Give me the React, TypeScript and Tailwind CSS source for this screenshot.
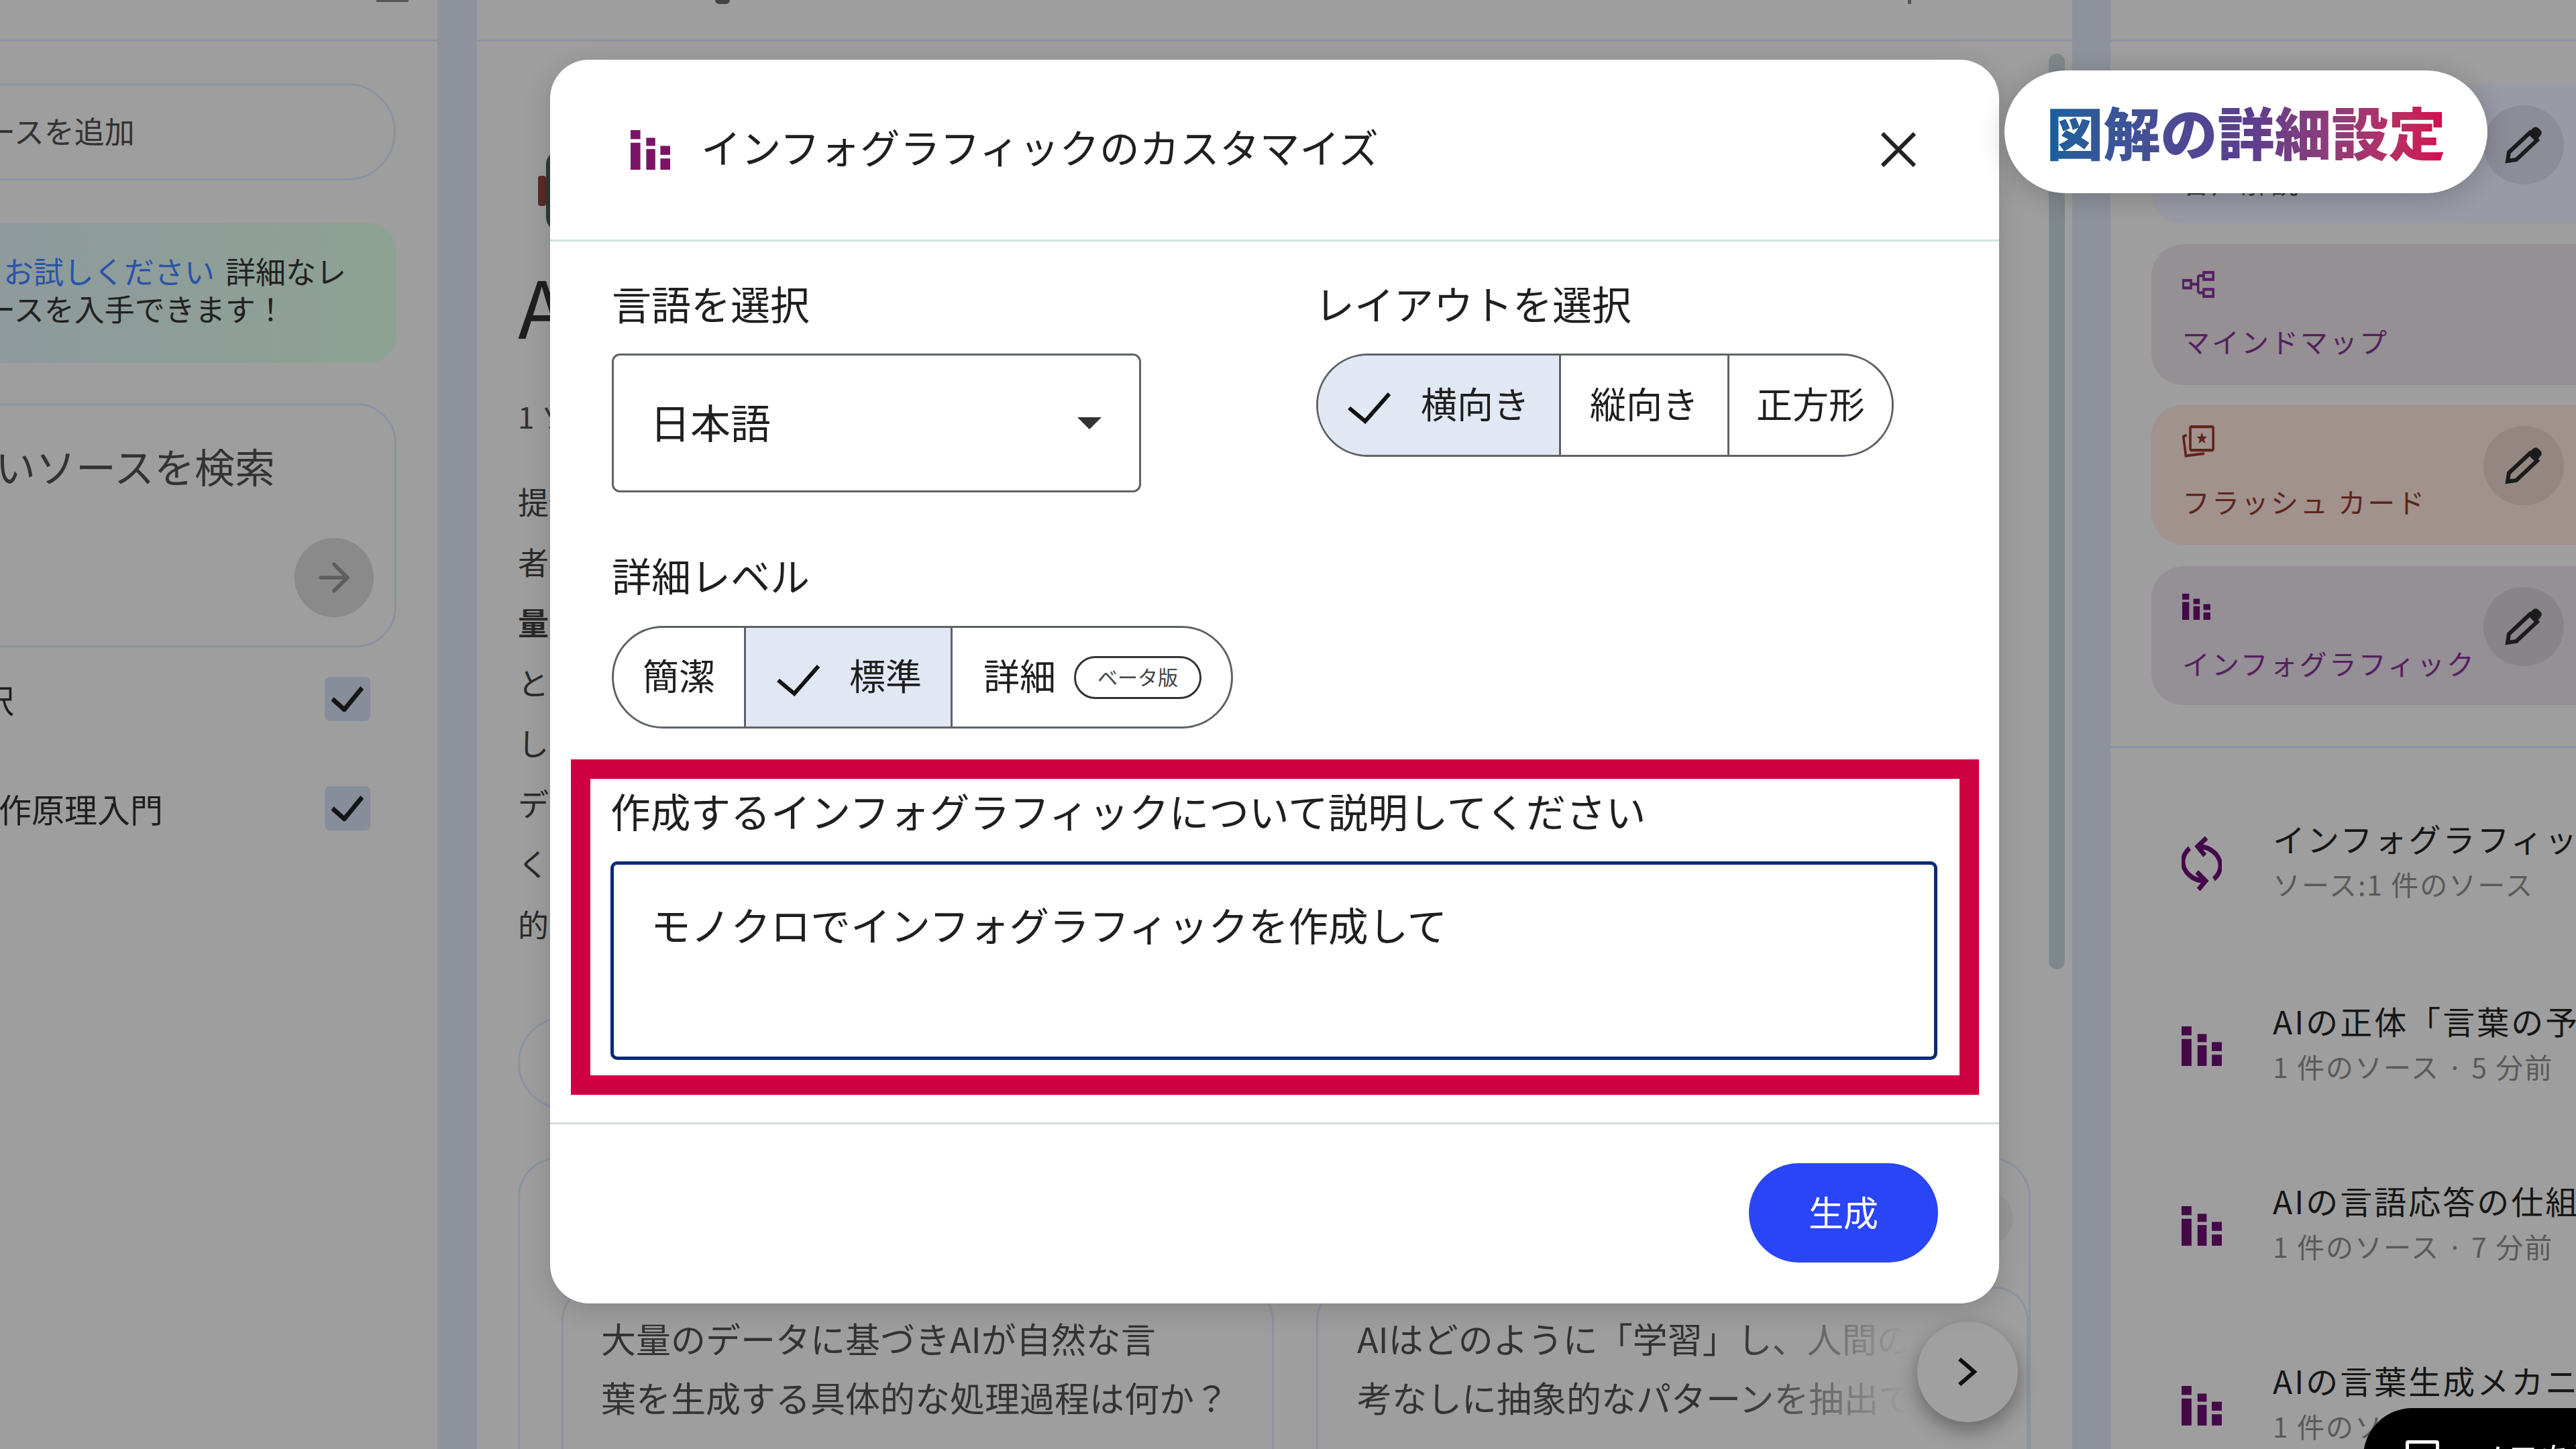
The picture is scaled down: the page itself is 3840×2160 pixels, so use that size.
import { ArrowRight } from "lucide-react";

function InfoIcon({ className }: { className: string }) {
  return (
    <svg viewBox="0 0 101 88" preserveAspectRatio="none" className={className} fill="currentColor">
      <rect x="0" y="0" width="25" height="20" />
      <rect x="0" y="28" width="25" height="60" />
      <rect x="40" y="17" width="23" height="18" />
      <rect x="40" y="42" width="23" height="46" />
      <rect x="76" y="35" width="25" height="20" />
      <rect x="76" y="63" width="25" height="25" />
    </svg>
  );
}

function SyncIcon() {
  return (
    <svg viewBox="0 0 100 120" preserveAspectRatio="none" className="w-[60px] h-[81px] text-[#45094a]" fill="none" stroke="currentColor" strokeWidth="11">
      <path d="M42 22C75 22 100 45 96 70C94 80 88 88 80 94" />
      <path d="M62 3L40 22L58 42" />
      <path d="M58 98C25 98 0 75 4 50C6 40 12 32 20 26" />
      <path d="M38 78L60 98L42 117" />
    </svg>
  );
}

function MindmapIcon() {
  return (
    <svg viewBox="0 0 81 57" preserveAspectRatio="none" className="w-[48px] h-[40px] text-[#55205f]" fill="none" stroke="currentColor" strokeWidth="6">
      <rect x="2" y="20" width="20" height="16" />
      <path d="M22 28H40M40 10V46M40 10H54M40 46H54" />
      <rect x="54" y="3" width="24" height="15" />
      <rect x="54" y="39" width="24" height="15" />
    </svg>
  );
}

function FlashIcon() {
  return (
    <svg viewBox="0 0 80 70" preserveAspectRatio="none" className="w-[48px] h-[49px] text-[#5e241c]" fill="none" stroke="currentColor" strokeWidth="6">
      <rect x="20" y="3" width="57" height="50" rx="3" />
      <path d="M11 21L3 24L9 65L55 60" />
      <path d="M49 15L52.5 24H62L54.5 30L57.5 39L49 33.5L40.500 39L43.500 30L36 24H45.500Z" fill="currentColor" stroke="none" />
    </svg>
  );
}

function Pencil() {
  return (
    <svg viewBox="0 0 56 56" className="w-[56px] h-[56px] text-[#1c1c1c]">
      <path d="M4 52L6 39L37 10L48 21L17 50Z" fill="none" stroke="currentColor" strokeWidth="6" />
      <path d="M35 9L43 2Q47 0 50 3L54 7Q56 11 53 14L47 22Z" fill="currentColor" />
    </svg>
  );
}

function Check({ className, sw = 6 }: { className: string; sw?: number }) {
  return (
    <svg viewBox="0 0 65 48" preserveAspectRatio="none" className={className} fill="none" stroke="currentColor" strokeWidth={sw}>
      <path d="M2 24L26 44L62 3" />
    </svg>
  );
}

function PencilButton() {
  return (
    <div className="absolute right-[85px] top-1/2 -translate-y-1/2 -mt-[14px] w-[120px] h-[118px] rounded-full bg-[#00000014] flex items-center justify-center">
      <Pencil />
    </div>
  );
}

function ToolCard({ bg, color, icon, label, top, pencil, h }: { bg: string; color: string; icon: React.ReactNode; label: string; top: string; pencil?: boolean; h: string }) {
  return (
    <div className={`relative w-[700px] rounded-[48px] pl-[46px] ${bg} ${color} ${top} ${h}`}>
      <div className="h-[100px] flex items-end pb-[20px]">{icon}</div>
      <div className="text-[41px] leading-[60px] tracking-[3px] whitespace-nowrap mt-[14px]">{label}</div>
      {pencil && <PencilButton />}
    </div>
  );
}

function Artifact({ title, sub, icon, mt }: { title: string; sub: string; icon: React.ReactNode; mt: string }) {
  return (
    <div className={`flex items-center ${mt}`}>
      <div className="w-[60px] flex justify-center ml-[106px] mt-[8px]">{icon}</div>
      <div className="ml-[76px] whitespace-nowrap">
        <div className="text-[48px] leading-[68px] tracking-[3px] text-[#161616]">{title}</div>
        <div className="text-[41px] leading-[68px] tracking-[2px] text-[#5a5a5a]">{sub}</div>
      </div>
    </div>
  );
}

export default function App() {
  return (
    <div className="relative w-[3840px] h-[2160px] overflow-hidden bg-[#8e929c] text-[#1f1f1f] font-['Noto_Sans_CJK_JP','Noto_Sans',sans-serif]">
      <div className="flex h-full">
        {/* left panel */}
        <div className="w-[652px] h-full bg-[#9e9e9e] overflow-hidden shrink-0">
          <div className="h-[62px] border-b-[3px] border-[#8b93a2] flex justify-end pr-[43px]">
            <div className="w-[48px] h-[3px] bg-[#555]" />
          </div>
          <div className="mt-[62px] -ml-[120px] w-[710px] h-[145px] rounded-full border-[3px] border-[#8b93a2] flex items-center pl-[50px] pb-[4px] text-[45px] text-[#333] whitespace-nowrap">
            ソースを追加
          </div>
          <div className="mt-[63px] -ml-[60px] w-[650px] h-[209px] rounded-[40px] bg-linear-to-r from-[#8e999d] to-[#8ea294] pt-[44px] text-[45px] leading-[56px] whitespace-nowrap text-[#222]">
            <div className="ml-[65px]">
              <span className="text-[#2b53a8]">お試しください</span>
              <span className="ml-[16px]">詳細なレ</span>
            </div>
            <div className="ml-[38px]">ースを入手できます！</div>
          </div>
          <div className="relative mt-[60px] -ml-[60px] w-[651px] h-[364px] rounded-[60px] border-[3px] border-[#8b93a2] pt-[50px] pl-[50px]">
            <div className="text-[60px] leading-[80px] whitespace-nowrap text-[#333]">いソースを検索</div>
            <div className="absolute right-[31px] top-[198px] w-[118px] h-[118px] rounded-full bg-[#8a8a8a] flex items-center justify-center">
              <ArrowRight className="w-[68px] h-[68px] text-[#5e5e5e]" strokeWidth={2} />
            </div>
          </div>
          <div className="mt-[44px] flex items-center justify-between h-[65px] pr-[100px] text-[49px]">
            <div className="-ml-[28px] whitespace-nowrap">択</div>
            <div className="w-[68px] h-[66px] rounded-[8px] bg-[#878e99] flex items-center justify-center">
              <Check className="w-[48px] h-[38px] text-[#151515]" sw={9} />
            </div>
          </div>
          <div className="mt-[98px] flex items-center justify-between h-[66px] pr-[100px] text-[49px]">
            <div className="-ml-[2px] whitespace-nowrap">作原理入門</div>
            <div className="w-[68px] h-[66px] rounded-[8px] bg-[#878e99] flex items-center justify-center">
              <Check className="w-[48px] h-[38px] text-[#151515]" sw={9} />
            </div>
          </div>
        </div>

        {/* center panel */}
        <div className="relative ml-[59px] w-[2378px] h-full bg-[#9e9e9e] overflow-hidden shrink-0">
          <div className="h-[62px] border-b-[3px] border-[#8b93a2] flex items-start justify-between pl-[355px] pr-[240px]">
            <div className="w-[22px] h-[6px] rounded-b-full bg-[#444]" />
            <div className="w-[5px] h-[6px] bg-[#555]" />
          </div>
          <div className="pl-[61px]">
            <div className="mt-[163px] h-[119px] ml-[30px] flex items-center">
              <div className="w-[12px] h-[45px] rounded-[4px] bg-[#5a2a26]" />
              <div className="w-[40px] h-[119px] rounded-full bg-[#2d3a3a]" />
            </div>
            <div className="mt-[50px] text-[118px] leading-[120px] whitespace-nowrap">AIの言葉の仕組み</div>
            <div className="mt-[76px] text-[44px] leading-[60px] text-[#333]">1 ソース</div>
            <div className="mt-[51px] text-[46px] leading-[90px] whitespace-nowrap text-[#2a2a2a]">
              <div>提供された資料は、AIの動作原理を解説したものです。</div>
              <div>者に向けて説明しています。</div>
              <div className="font-bold">量のデータ</div>
              <div>として学習します。</div>
              <div>します。</div>
              <div>データから</div>
              <div>くの例を示します。</div>
              <div>的な内容です。</div>
            </div>
            <div className="mt-[94px] w-[500px] h-[139px] rounded-full border-[3px] border-[#8b93a2]" />
            <div className="mt-[71px] w-[2255px] h-[600px] rounded-[60px] border-[3px] border-[#8b93a2] pl-[62px] pt-[190px] flex gap-[63px]">
              <div className="w-[1066px] h-[400px] rounded-[50px] border-[3px] border-[#8b93a2] pl-[56px] pt-[30px] text-[52px] leading-[88px] text-[#333] whitespace-nowrap">
                <div>大量のデータに基づきAIが自然な言</div>
                <div>葉を生成する具体的な処理過程は何か？</div>
              </div>
              <div className="w-[1066px] h-[400px] rounded-[50px] border-[3px] border-[#8b93a2] pl-[58px] pt-[30px] text-[52px] leading-[88px] text-[#333] whitespace-nowrap">
                <div>AIはどのように「学習」し、人間の思</div>
                <div>考なしに抽象的なパターンを抽出で</div>
              </div>
            </div>
          </div>
          {/* fade on the card row, next to the arrow */}
          <div className="absolute left-[1880px] top-[1960px] w-[360px] h-[180px] bg-linear-to-r from-transparent to-[#9e9e9e] to-70%" />
          <div className="absolute left-[2147px] top-[1970px] w-[150px] h-[150px] rounded-full bg-[#a0a0a0] shadow-[0_12px_30px_rgba(0,0,0,0.35)] flex items-center justify-center">
            <svg viewBox="0 0 30 44" className="w-[30px] h-[44px] text-[#111]" fill="none" stroke="currentColor" strokeWidth="6">
              <path d="M3 3L25 22L3 41" />
            </svg>
          </div>
          <div className="absolute left-[2210px] top-[1776px] w-[80px] h-[80px] rounded-full bg-[#979797]" />
          <div className="absolute right-[11px] top-[80px] w-[24px] h-[1365px] rounded-full bg-[#7f888c]" />
        </div>

        {/* right panel */}
        <div className="ml-[57px] flex-1 h-full bg-[#9e9e9e] overflow-hidden">
          <div className="h-[62px] border-b-[3px] border-[#8b93a2]" />
          <div className="pl-[61px]">
            <ToolCard bg="bg-[#989aa6]" color="text-[#333]" top="mt-[64px]" h="h-[207px]" label="音声解説" icon={<div className="w-[48px] h-[40px]" />} pencil />
            <ToolCard bg="bg-[#949093]" color="text-[#55205f]" top="mt-[31px]" h="h-[210px]" label="マインドマップ" icon={<MindmapIcon />} />
            <ToolCard bg="bg-[#a1928d]" color="text-[#5e241c]" top="mt-[29px]" h="h-[209px]" label="フラッシュ カード" icon={<FlashIcon />} pencil />
            <ToolCard bg="bg-[#958f96]" color="text-[#55205f]" top="mt-[32px]" h="h-[207px]" label="インフォグラフィック" icon={<InfoIcon className="w-[42px] h-[39px] text-[#45094a]" />} pencil />
          </div>
          <div className="mt-[61px] border-t-[3px] border-[#8b93a2]" />
          <Artifact mt="mt-[100px]" icon={<SyncIcon />} title="インフォグラフィック" sub="ソース:1 件のソース" />
          <Artifact mt="mt-[136px]" icon={<InfoIcon className="w-[60px] h-[59px] text-[#45094a]" />} title="AIの正体「言葉の予測」" sub="1 件のソース · 5 分前" />
          <Artifact mt="mt-[132px]" icon={<InfoIcon className="w-[60px] h-[59px] text-[#45094a]" />} title="AIの言語応答の仕組み" sub="1 件のソース · 7 分前" />
          <Artifact mt="mt-[132px]" icon={<InfoIcon className="w-[60px] h-[59px] text-[#45094a]" />} title="AIの言葉生成メカニズム" sub="1 件のソース · 9 分前" />
        </div>
      </div>

      {/* notes button over the list */}
      <div className="absolute left-[3523px] top-[2099px] w-[500px] h-[146px] rounded-full bg-black flex items-center pl-[63px] text-white text-[50px] whitespace-nowrap">
        <div className="w-[50px] h-[50px] rounded-[4px] border-[5px] border-white" />
        <span className="ml-[50px]">メモを追加</span>
      </div>

      {/* modal */}
      <div className="absolute left-[820px] top-[89px] w-[2160px] h-[1854px] rounded-[58px] bg-white flex flex-col shadow-[0_10px_40px_rgba(0,0,0,0.15)]">
        <div className="h-[271px] shrink-0 border-b-[3px] border-[#d3e3e0] flex items-center pl-[120px] pr-[124px]">
          <InfoIcon className="w-[59px] h-[59px] text-[#7b1466]" />
          <div className="ml-[46px] -mt-[10px] text-[59.7px] leading-[80px] flex-1">インフォグラフィックのカスタマイズ</div>
          <svg viewBox="0 0 52 52" className="w-[52px] h-[52px] text-[#222]" stroke="currentColor" strokeWidth="6">
            <path d="M2 2L50 50M50 2L2 50" />
          </svg>
        </div>
        <div className="flex-1 px-[92px] pt-[52px]">
          <div className="flex">
            <div className="w-[1050px]">
              <div className="text-[59px] leading-[80px] mb-[35px]">言語を選択</div>
              <div className="w-[789px] h-[207px] rounded-[12px] border-[3px] border-[#5f6368] flex items-center justify-between pl-[54px] pr-[56px]">
                <span className="text-[60px] -mt-[6px]">日本語</span>
                <svg viewBox="0 0 36 18" className="w-[36px] h-[18px] text-[#333]" fill="currentColor">
                  <path d="M0 0H36L18 18Z" />
                </svg>
              </div>
            </div>
            <div>
              <div className="text-[59px] leading-[80px] mb-[35px] -ml-[2px]">レイアウトを選択</div>
              <div className="flex w-[861px] h-[154px] rounded-full border-[3px] border-[#5f6368] overflow-hidden text-[54px]">
                <div className="w-[362px] bg-[#e2e7f4] border-r-[3px] border-[#5f6368] flex items-center pl-[44px]">
                  <Check className="w-[65px] h-[48px] mt-[8px] text-[#111]" />
                  <span className="ml-[44px] -mt-[8px]">横向き</span>
                </div>
                <div className="w-[251px] border-r-[3px] border-[#5f6368] flex items-center justify-center pb-[8px]">縦向き</div>
                <div className="flex-1 flex items-center justify-center pb-[8px]">正方形</div>
              </div>
            </div>
          </div>
          <div className="mt-[83px] text-[59px] leading-[80px] mb-[36px]">詳細レベル</div>
          <div className="flex w-[926px] h-[153px] rounded-full border-[3px] border-[#5f6368] overflow-hidden text-[54px]">
            <div className="w-[197px] border-r-[3px] border-[#5f6368] flex items-center justify-center pb-[8px]">簡潔</div>
            <div className="w-[308px] bg-[#e2e7f4] border-r-[3px] border-[#5f6368] flex items-center pl-[46px]">
              <Check className="w-[65px] h-[48px] mt-[8px] text-[#111]" />
              <span className="ml-[43px] -mt-[8px]">標準</span>
            </div>
            <div className="flex-1 flex items-center pl-[46px]">
              <span className="-mt-[8px]">詳細</span>
              <div className="ml-[27px] w-[190px] h-[64px] rounded-full border-[3px] border-[#333] flex items-center justify-center pb-[2px] text-[30px] text-[#444]">ベータ版</div>
            </div>
          </div>
          <div className="mt-[46px] -ml-[61px] w-[2099px] border-[29px] border-[#cf0042] px-[30px] pt-[7px] pb-[23px]">
            <div className="text-[59.7px] leading-[80px] mb-[36px]">作成するインフォグラフィックについて説明してください</div>
            <div className="w-[1978px] h-[296px] rounded-[10px] border-[5px] border-[#0a2a78] pl-[55px] pt-[48px] text-[59.6px] leading-[80px]">
              モノクロでインフォグラフィックを作成して
            </div>
          </div>
        </div>
        <div className="h-[270px] shrink-0 border-t-[3px] border-[#d5dde3] flex justify-end pt-[58px] pr-[91px]">
          <div className="w-[282px] h-[148px] rounded-full bg-[#2a45f5] text-white text-[52px] flex items-center justify-center pb-[4px]">生成</div>
        </div>
      </div>

      {/* annotation */}
      <div className="absolute left-[2988px] top-[105px] w-[720px] h-[183px] rounded-full bg-white shadow-[0_6px_40px_rgba(0,0,0,0.2)] flex items-center justify-center">
        <span className="text-[85px] font-black leading-[110px] -mt-[4px] whitespace-nowrap bg-linear-to-r from-[#14609c] via-[#5a3d90] to-[#d6004e] bg-clip-text text-transparent">図解の詳細設定</span>
      </div>
    </div>
  );
}
